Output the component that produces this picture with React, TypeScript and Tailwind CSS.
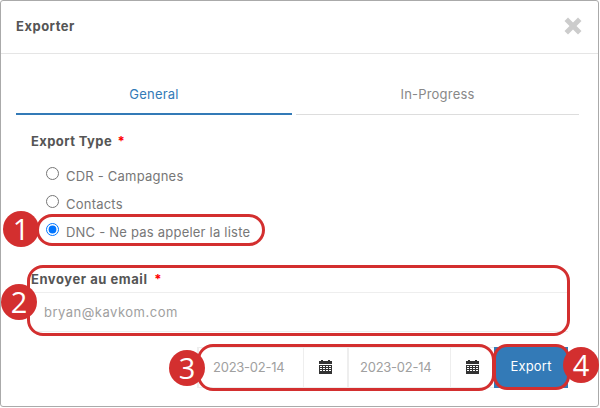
import React from "react";

const font = "[font-family:'Inter','Liberation_Sans',sans-serif]";

// numbered red callout over the screenshot
const Badge = ({ n, className }: { n: number; className: string }) => (
  <div
    className={`absolute w-[36px] h-[36px] rounded-full bg-[#d32f2f] text-white text-[29px] leading-[36px] text-center [font-family:'Open_Sans',sans-serif] ${className}`}
  >
    {n}
  </div>
);

const Ring = ({ className }: { className: string }) => (
  <div className={`absolute border-[3px] border-[#d32f2f] ${className}`}></div>
);

const CalendarIcon = () => (
  <svg width="13" height="14" viewBox="0 0 13 14" fill="#333">
    <rect x="2" y="0" width="2" height="2" />
    <rect x="9" y="0" width="2" height="2" />
    <rect x="0" y="1" width="13" height="3" />
    <path
      fillRule="evenodd"
      d="M0 5h13v9H0zM1 6v1h2V6zM4 6v1h2V6zM7 6v1h2V6zM10 6v1h2V6zM1 8v1h2V8zM4 8v1h2V8zM7 8v1h2V8zM10 8v1h2V8zM1 10v1h2v-1zM4 10v1h2v-1zM7 10v1h2v-1zM10 10v1h2v-1z"
    />
  </svg>
);

const Radio = ({ label, checked }: { label: string; checked?: boolean }) => (
  <label className="flex h-[28px] items-center">
    <input
      type="radio"
      name="type"
      defaultChecked={checked}
      className="w-[13px] h-[13px] ml-[45px] mb-[6px] accent-[#0075ff]"
    />
    <span className="ml-[7px] text-[13px] tracking-[0.22px] text-[#777]">{label}</span>
  </label>
);

const DateBox = ({ value, className }: { value: string; className: string }) => (
  <div className="flex h-[41px] border-y border-[#eee]">
    <div className={`leading-[39px] text-[13px] tracking-[-0.25px] text-[#a0a0a0] border-l-2 border-[#eee] ${className}`}>
      {value}
    </div>
    <div className="w-[44px] flex items-center justify-center border-l border-[#eee]">
      <CalendarIcon />
    </div>
  </div>
);

export default function App() {
  return (
    <div className={`relative w-[600px] h-[408px] overflow-hidden bg-white ${font}`}>
      <div className="h-[407px] w-[599px] border border-[#aaa] rounded-[3px] bg-white">
        <div className="flex h-[53px] items-center justify-between border-b border-[#e5e5e5] pl-[15px] pr-[16px]">
          <h4 className="text-[13px] font-bold tracking-[0.5px] text-[#555]">Exporter</h4>
          <span className="text-[#ccc] -mt-[2px]">
            <svg width="18" height="18" viewBox="0 0 18 18" fill="currentColor">
              <path d="M4 0.5 9 5.5 14 0.5 17.5 4 12.5 9 17.5 14 14 17.5 9 12.5 4 17.5 0.5 14 5.5 9 0.5 4z" />
            </svg>
          </span>
        </div>

        <div className="flex ml-[15px] mr-[19px] mt-[23px] text-[13px] tracking-[0.2px] text-center">
          <div className="w-[276px] h-[38px] leading-[34px] text-[#337ab7] border-b-2 border-[#337ab7]">
            General
          </div>
          <div className="flex-1 ml-[4px] h-[38px] leading-[34px] text-[#888] border-b border-[#ddd]">
            In-Progress
          </div>
        </div>

        <div className="mt-[17px] ml-[30px] text-[13px] font-bold tracking-[0.4px] text-[#555]">
          Export Type <span className="ml-[2px] text-[#f00]">*</span>
        </div>
        <div className="mt-[11px]">
          <Radio label="CDR - Campagnes" />
          <Radio label="Contacts" />
          <Radio label="DNC - Ne pas appeler la liste" checked />
        </div>

        <div className="mt-[22px] ml-[30px] text-[13px] font-bold tracking-[0.55px] text-[#555] leading-[20px]">
          Envoyer au email <span className="ml-[3px] text-[#f00]">*</span>
        </div>
        <div className="ml-[31px] mr-[30px] mt-[3px] h-[40px] pl-[12px] border-y border-[#eee] text-[13px] tracking-[0.5px] leading-[38px] text-[#a0a0a0]">
          bryan@kavkom.com
        </div>

        <div className="flex justify-end mr-[30px] mt-[15px]">
          <DateBox value="2023-02-14" className="w-[106px] pl-[14px]" />
          <DateBox value="2023-02-14" className="w-[103px] pl-[11px]" />
          <button className="w-[74px] h-[41px] bg-[#337ab7] text-white text-[13px] tracking-[0.2px]">
            Export
          </button>
        </div>
      </div>

      <Ring className="left-[36px] top-[214px] w-[229px] h-[32px] rounded-[16px]" />
      <Ring className="left-[27px] top-[265px] w-[543px] h-[71px] rounded-[16px]" />
      <Ring className="left-[197px] top-[344px] w-[298px] h-[47px] rounded-[16px]" />
      <Ring className="left-[493px] top-[344px] w-[77px] h-[46px] rounded-[14px]" />

      <Badge n={1} className="left-[3px] top-[211px]" />
      <Badge n={2} className="left-[1px] top-[284px]" />
      <Badge n={3} className="left-[169px] top-[350px]" />
      <Badge n={4} className="left-[563px] top-[347px]" />
    </div>
  );
}
